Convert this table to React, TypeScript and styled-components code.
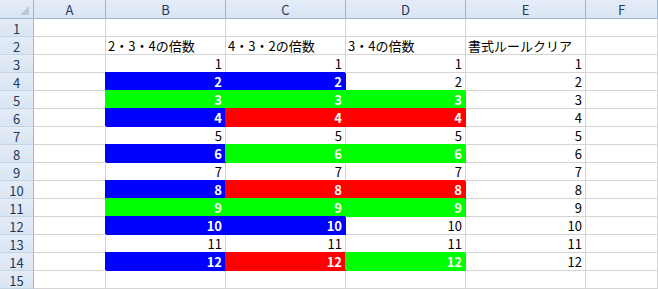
import React from 'react';
import styled, { createGlobalStyle } from 'styled-components';

const GlobalStyle = createGlobalStyle`
  html, body {
    margin: 0;
    padding: 0;
    background: #ffffff;
  }
  * {
    box-sizing: border-box;
  }
`;

type Fill = 'blue' | 'green' | 'red' | null;

const fillColors: Record<string, string> = {
  blue: '#0000ff',
  green: '#00ff00',
  red: '#ff0000',
};

const columns = ['A', 'B', 'C', 'D', 'E', 'F'];
const headings = ['', '2・3・4の倍数', '4・3・2の倍数', '3・4の倍数', '書式ルールクリア', ''];

// rules in priority order, first match wins
const fillFor = (col: number, n: number): Fill => {
  if (col === 1) {
    if (n % 2 === 0) return 'blue';
    if (n % 3 === 0) return 'green';
  }
  if (col === 2) {
    if (n % 4 === 0) return 'red';
    if (n % 3 === 0) return 'green';
    if (n % 2 === 0) return 'blue';
  }
  if (col === 3) {
    if (n % 3 === 0) return 'green';
    if (n % 4 === 0) return 'red';
  }
  return null;
};

export default function App() {
  const rows = Array.from({ length: 15 }, (_, i) => i + 1);
  return (
    <>
      <GlobalStyle />
      <Sheet>
        <Corner>
          <CornerMark />
        </Corner>
        {columns.map((c) => (
          <ColHeader key={c}>{c}</ColHeader>
        ))}
        {rows.map((r) => (
          <React.Fragment key={r}>
            <RowHeader>{r}</RowHeader>
            {columns.map((c, ci) => {
              if (r === 2) {
                return <TextCell key={c}>{headings[ci]}</TextCell>;
              }
              const n = r - 2;
              if (r >= 3 && r <= 14 && ci >= 1 && ci <= 4) {
                const fill = fillFor(ci, n);
                return (
                  <NumCell key={c} $fill={fill ? fillColors[fill] : undefined}>
                    {n}
                  </NumCell>
                );
              }
              return <Cell key={c} />;
            })}
          </React.Fragment>
        ))}
      </Sheet>
    </>
  );
}

const Sheet = styled.div`
  display: grid;
  grid-template-columns: 34px 72px 120px 120px 120px 120px 72px;
  grid-template-rows: 19px repeat(15, 18px);
  width: 658px;
  height: 289px;
  overflow: hidden;
  font-family: "Noto Sans CJK JP", "Liberation Sans", sans-serif;
  font-size: 13px;
  color: #000000;
`;

const HeaderBase = styled.div`
  background: linear-gradient(#e4ecf7, #dae5f3);
  color: #1e395b;
  border-right: 1px solid #9eb6ce;
  border-bottom: 1px solid #9eb6ce;
  display: flex;
  align-items: center;
  justify-content: center;
  line-height: 1;
`;

const Corner = styled(HeaderBase)`
  position: relative;
`;

const CornerMark = styled.div`
  position: absolute;
  right: 4px;
  bottom: 3px;
  width: 0;
  height: 0;
  border-left: 9px solid transparent;
  border-bottom: 9px solid #b9c9dc;
`;

const ColHeader = styled(HeaderBase)`
  padding-top: 1px;
`;

const RowHeader = styled(HeaderBase)`
  border-bottom-color: #c5d3e3;
  padding-top: 1px;
`;

const Cell = styled.div`
  border-right: 1px solid #d4d4d4;
  border-bottom: 1px solid #d4d4d4;
  background: #ffffff;
  white-space: nowrap;
  line-height: 17px;
`;

const TextCell = styled(Cell)`
  padding-left: 2px;
  overflow: visible;
`;

const NumCell = styled(Cell)<{ $fill?: string }>`
  text-align: right;
  padding-right: 3px;
  background: ${(p) => p.$fill ?? '#ffffff'};
  color: ${(p) => (p.$fill ? '#ffffff' : '#000000')};
  font-weight: ${(p) => (p.$fill ? 700 : 400)};
  border-right-color: ${(p) => p.$fill ?? '#d4d4d4'};
  border-bottom-color: ${(p) => p.$fill ?? '#d4d4d4'};
  box-shadow: ${(p) => (p.$fill ? `-1px -1px 0 0 ${p.$fill}` : 'none')};
`;
